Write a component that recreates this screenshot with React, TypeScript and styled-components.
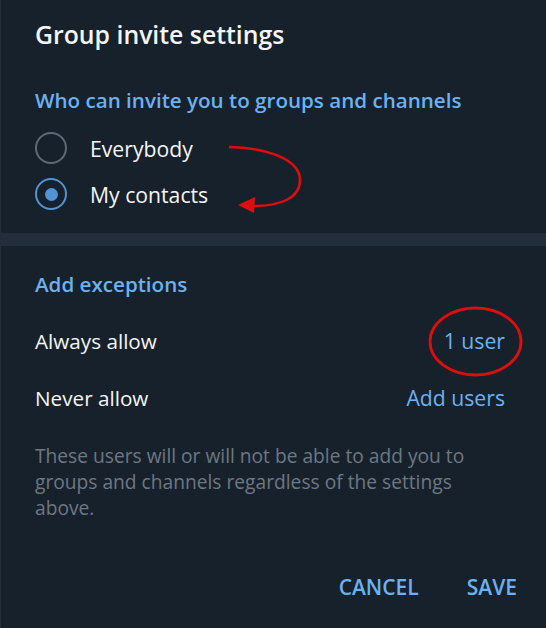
import React from "react";
import styled, { createGlobalStyle } from "styled-components";

const Global = createGlobalStyle`
  html, body { margin: 0; padding: 0; background: #17212b; }
  body { font-family: "Open Sans", "Noto Sans", sans-serif; }
  * { box-sizing: border-box; }
`;

const Dialog = styled.div`
  position: relative;
  width: 546px;
  height: 628px;
  background: #17212b;
  border-left: 1px solid #222d39;
  display: flex;
  flex-direction: column;
  color: #f5f5f5;
  overflow: hidden;
`;

const Title = styled.h1`
  margin: 0;
  padding: 17px 0 0 34px;
  height: 66px;
  font-size: 24.8px;
  font-weight: 600;
  line-height: 34px;
  color: #f5f5f5;
`;

const Section = styled.section<{ $pad?: string }>`
  display: flex;
  flex-direction: column;
  padding: ${(p) => p.$pad ?? "0"};
`;

const SectionHeader = styled.div`
  padding: 0 34px;
  height: 30px;
  display: flex;
  align-items: center;
  font-size: 20.6px;
  font-weight: 600;
  color: #6ab2f2;
`;

const Spacer = styled.div<{ $h: number }>`
  height: ${(p) => p.$h}px;
  flex: none;
`;

const RadioRow = styled.label`
  display: flex;
  align-items: center;
  height: 46px;
  padding: 0 34px;
  gap: 23px;
  font-size: 21.2px;
  color: #f5f5f5;
`;

const RadioCircle = styled.span<{ $on: boolean }>`
  width: 32px;
  height: 32px;
  border-radius: 50%;
  border: 2.5px solid ${(p) => (p.$on ? "#5094d6" : "#5e6a76")};
  display: flex;
  align-items: center;
  justify-content: center;
  flex: none;
  &::after {
    content: "";
    width: 13px;
    height: 13px;
    border-radius: 50%;
    background: ${(p) => (p.$on ? "#5094d6" : "transparent")};
  }
`;

const Band = styled.div`
  height: 13px;
  background: #232e3c;
  flex: none;
`;

const Row = styled.div`
  display: flex;
  align-items: center;
  justify-content: space-between;
  height: 57px;
  padding: 0 41px 0 34px;
`;

const RowLabel = styled.span`
  font-size: 20.7px;
  color: #f5f5f5;
`;

const RowValue = styled.span`
  font-size: 21.2px;
  color: #6ab2f2;
`;

const Note = styled.p`
  margin: 0;
  padding: 0 60px 0 34px;
  font-size: 19.2px;
  line-height: 26px;
  color: #6d7883;
`;

const Footer = styled.div`
  margin-top: auto;
  display: flex;
  justify-content: flex-end;
  gap: 48px;
  padding: 0 29px 27px 0;
`;

const Button = styled.button`
  background: none;
  border: none;
  padding: 0;
  font-family: inherit;
  font-size: 21px;
  font-weight: 600;
  color: #6ab2f2;
  line-height: 28px;
  cursor: pointer;
`;

const Overlay = styled.svg`
  position: absolute;
  left: 0;
  top: 0;
  pointer-events: none;
`;

export default function App() {
  return (
    <>
      <Global />
      <Dialog>
        <Title>Group invite settings</Title>
        <Section $pad="19px 0 16px">
          <SectionHeader>Who can invite you to groups and channels</SectionHeader>
          <Spacer $h={10} />
          <RadioRow>
            <RadioCircle $on={false} />
            Everybody
          </RadioRow>
          <RadioRow>
            <RadioCircle $on={true} />
            My contacts
          </RadioRow>
        </Section>
        <Band />
        <Section $pad="23px 0 0">
          <SectionHeader>Add exceptions</SectionHeader>
          <Spacer $h={13} />
          <Row>
            <RowLabel>Always allow</RowLabel>
            <RowValue>1 user</RowValue>
          </Row>
          <Row>
            <RowLabel>Never allow</RowLabel>
            <RowValue>Add users</RowValue>
          </Row>
          <Spacer $h={17} />
          <Note>
            These users will or will not be able to add you to groups and
            channels regardless of the settings above.
          </Note>
        </Section>
        <Footer>
          <Button>CANCEL</Button>
          <Button>SAVE</Button>
        </Footer>
        <Overlay width="546" height="628" viewBox="0 0 546 628">
          <path
            d="M228 147 C 268 148, 299 160, 299 180 C 299 198, 280 206, 252 206"
            fill="none"
            stroke="#e00d0d"
            strokeWidth="2.5"
          />
          <polygon points="237,205 254,197 253,213" fill="#e00d0d" />
          <ellipse
            cx="474.5"
            cy="341.5"
            rx="45.5"
            ry="33.5"
            fill="none"
            stroke="#e00d0d"
            strokeWidth="2.8"
          />
        </Overlay>
      </Dialog>
    </>
  );
}
